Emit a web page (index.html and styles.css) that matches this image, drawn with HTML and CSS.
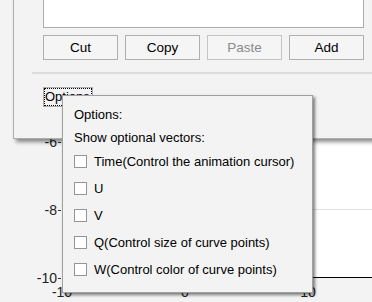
FILE: index.html
```html
<!DOCTYPE html>
<html lang="en">
<head>
  <meta charset="UTF-8" />
  <title>Curve Editor - Options</title>
  <link rel="stylesheet" href="styles.css">
</head>
<body>

<div class="figure">
  <!-- plot behind the dialog -->
  <div class="axes">
    <div class="gridline at-8"></div>
  </div>
  <span class="ytick at-6">-6</span>
  <span class="ytick at-8">-8</span>
  <span class="ytick at-10">-10</span>
  <span class="xtick at-left">-10</span>
  <span class="xtick at-mid">0</span>
  <span class="xtick at-right">10</span>

  <!-- editor dialog -->
  <div class="dialog">
    <div class="text-box"></div>
    <div class="btn-row">
      <button class="btn">Cut</button>
      <button class="btn">Copy</button>
      <button class="btn" disabled>Paste</button>
      <button class="btn">Add</button>
    </div>
    <div class="separator"></div>
    <button class="options-btn"><span class="focus-ring">Options</span></button>
  </div>

  <!-- options popup -->
  <div class="popup">
    <p class="popup-title">Options:</p>
    <p class="popup-title">Show optional vectors:</p>
    <div class="check-list">
      <label class="check-row"><span class="check-box"></span>Time(Control the animation cursor)</label>
      <label class="check-row"><span class="check-box"></span>U</label>
      <label class="check-row"><span class="check-box"></span>V</label>
      <label class="check-row"><span class="check-box"></span>Q(Control size of curve points)</label>
      <label class="check-row"><span class="check-box"></span>W(Control color of curve points)</label>
    </div>
  </div>
</div>

</body>
</html>
```

FILE: styles.css
```css
/* Reset */
* {
  margin: 0;
  padding: 0;
  box-sizing: border-box;
}
body {
  width: 372px;
  height: 302px;
  overflow: hidden;
  background: #f3f3f3;
  font-family: "Liberation Sans", Arial, sans-serif;
  font-size: 13px;
  color: #000;
}
.figure {
  position: relative;
  width: 372px;
  height: 302px;
  overflow: hidden;
}

/* Plot */
.axes {
  position: absolute;
  left: 62px;
  top: 60px;
  width: 330px;
  height: 218px;
  background: #fff;
  border-left: 1px solid #000;
  border-bottom: 1px solid #000;
}
.gridline {
  position: absolute;
  left: 0;
  right: 0;
  height: 1px;
  background: #e2e2e2;
}
.gridline.at-8 { top: 149px; }
.ytick {
  position: absolute;
  left: 17px;
  width: 40px;
  text-align: right;
  font-size: 14px;
  line-height: 16px;
  color: #222;
}
.ytick::after {
  content: '';
  position: absolute;
  right: -4px;
  top: 8px;
  width: 3px;
  height: 1px;
  background: #333;
}
.ytick.at-6 { top: 134px; }
.ytick.at-8 { top: 202px; }
.ytick.at-10 { top: 270px; }
.xtick {
  position: absolute;
  top: 284px;
  width: 30px;
  text-align: center;
  font-size: 14px;
  line-height: 16px;
  color: #222;
}
.xtick.at-left { left: 47px; }
.xtick.at-mid { left: 170px; }
.xtick.at-right { left: 293px; }

/* Dialog */
.dialog {
  position: absolute;
  left: 13px;
  top: -40px;
  width: 380px;
  height: 179px;
  background: #f3f3f3;
  border: 1px solid #adadad;
  box-shadow: 3px 3px 4px rgba(0,0,0,0.45);
  display: flex;
  flex-direction: column;
  align-items: flex-start;
}
.text-box {
  margin-left: 29px;
  width: 321px;
  height: 67px;
  background: #fff;
  border: 1px solid #adadad;
}
.btn-row {
  display: flex;
  gap: 7px;
  margin: 7px 0 0 29px;
}
.btn {
  width: 75px;
  height: 25px;
  border: 1px solid #b0b0b0;
  background: #f5f5f5;
  font-family: inherit;
  font-size: 13.5px;
  color: #000;
}
.btn:disabled {
  color: #8a8a8a;
  border-color: #c4c4c4;
}
.separator {
  margin: 12px 0 0 18px;
  width: 360px;
  height: 2px;
  background: #dcdcdc;
}
.options-btn {
  margin: 13px 0 0 29px;
  width: 50px;
  height: 20px;
  border: 1px solid #adadad;
  background: #f3f3f3;
  padding: 0;
  font-family: inherit;
  font-size: 13px;
  color: #000;
  text-align: left;
}
.focus-ring {
  display: block;
  height: 100%;
  border: 1px dotted #000;
  line-height: 15px;
  overflow: hidden;
  white-space: nowrap;
}

/* Popup */
.popup {
  position: absolute;
  left: 62px;
  top: 95px;
  width: 251px;
  height: 198px;
  background: #f3f3f3;
  border: 1px solid #a0a0a0;
  box-shadow: 2px 2px 3px rgba(0,0,0,0.5);
  padding: 11px 0 0 11px;
}
.popup-title {
  line-height: 16px;
  margin-bottom: 7px;
}
.check-list {
  display: flex;
  flex-direction: column;
  gap: 11px;
  margin-top: 2px;
}
.check-row {
  display: flex;
  align-items: center;
  gap: 7px;
  height: 16px;
}
.check-box {
  width: 13px;
  height: 13px;
  border: 1px solid #959595;
  background: #fff;
}
```
